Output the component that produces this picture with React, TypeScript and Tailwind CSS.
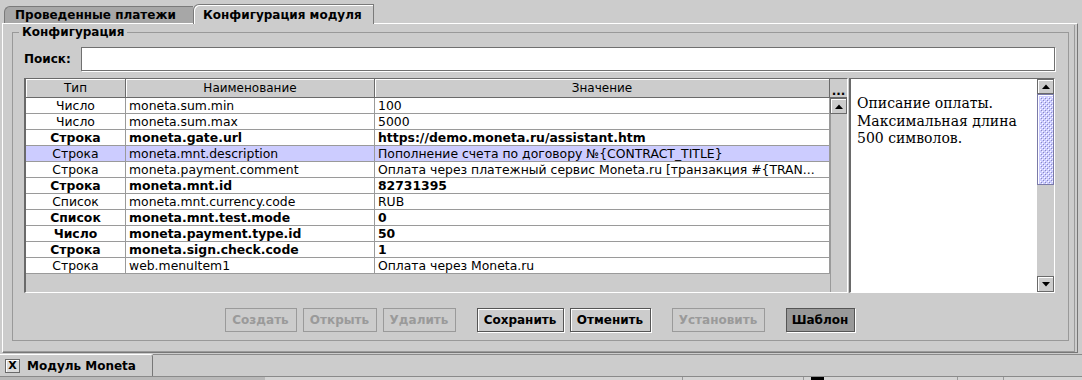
import React from 'react';

type Row = { type: string; name: string; value: string; bold?: boolean; selected?: boolean };

const rows: Row[] = [
  { type: 'Число', name: 'moneta.sum.min', value: '100' },
  { type: 'Число', name: 'moneta.sum.max', value: '5000' },
  { type: 'Строка', name: 'moneta.gate.url', value: 'https://demo.moneta.ru/assistant.htm', bold: true },
  { type: 'Строка', name: 'moneta.mnt.description', value: 'Пополнение счета по договору №{CONTRACT_TITLE}', selected: true },
  { type: 'Строка', name: 'moneta.payment.comment', value: 'Оплата через платежный сервис Moneta.ru [транзакция #{TRAN...' },
  { type: 'Строка', name: 'moneta.mnt.id', value: '82731395', bold: true },
  { type: 'Список', name: 'moneta.mnt.currency.code', value: 'RUB' },
  { type: 'Список', name: 'moneta.mnt.test.mode', value: '0', bold: true },
  { type: 'Число', name: 'moneta.payment.type.id', value: '50', bold: true },
  { type: 'Строка', name: 'moneta.sign.check.code', value: '1', bold: true },
  { type: 'Строка', name: 'web.menuItem1', value: 'Оплата через Moneta.ru' },
];

const buttons = [
  { label: 'Создать', w: 'w-[72px]', state: 'off', gap: '' },
  { label: 'Открыть', w: 'w-[74px]', state: 'off', gap: 'ml-[6px]' },
  { label: 'Удалить', w: 'w-[73px]', state: 'off', gap: 'ml-[6px]' },
  { label: 'Сохранить', w: 'w-[87px]', state: 'on', gap: 'ml-[21px]' },
  { label: 'Отменить', w: 'w-[81px]', state: 'on', gap: 'ml-[6px]' },
  { label: 'Установить', w: 'w-[93px]', state: 'off', gap: 'ml-[21px]' },
  { label: 'Шаблон', w: 'w-[69px]', state: 'pressed', gap: 'ml-[21px]' },
];

const Arrow = ({ down }: { down?: boolean }) => (
  <svg width="8" height="5" viewBox="0 0 8 5">
    <path d={down ? 'M0 0 L8 0 L4 4.5 Z' : 'M0 5 L4 0.5 L8 5 Z'} fill="#000" />
  </svg>
);

const ArrowButton = ({ down, h }: { down?: boolean; h: string }) => (
  <div className={`${h} flex items-center justify-center bg-[#cccccc] border border-[#6a6a6a] shadow-[inset_1px_1px_0_#ffffff]`}>
    <Arrow down={down} />
  </div>
);

const Bumps = () => (
  <svg width="100%" height="100%">
    <defs>
      <pattern id="bumps" width="4" height="4" patternUnits="userSpaceOnUse">
        <rect x="0" y="0" width="1" height="1" fill="#ffffff" />
        <rect x="1" y="1" width="1" height="1" fill="#8a8ac0" />
        <rect x="2" y="2" width="1" height="1" fill="#ffffff" />
        <rect x="3" y="3" width="1" height="1" fill="#8a8ac0" />
      </pattern>
    </defs>
    <rect x="2" y="2" width="100%" height="100%" fill="url(#bumps)" />
  </svg>
);

export default function App() {
  return (
    <div className="w-[1082px] h-[380px] bg-[#cccccc] overflow-hidden flex flex-col text-black font-['DejaVu_Sans',sans-serif]">
      {/* Tabs */}
      <div className="h-[23px] flex items-end pl-[4px]">
        <div className="h-[17px] w-[189px] bg-[#a7a7a7] border-t border-l border-[#7a7a7a] rounded-tl-[6px] flex items-center pl-[10px] text-[12px] font-bold leading-none">
          Проведенные платежи
        </div>
        <div className="relative z-10 -mb-[1px] h-[20px] w-[181px] bg-[#cccccc] border-t border-l border-r border-[#7a7a7a] rounded-tl-[6px] shadow-[inset_1px_1px_0_#ffffff] flex items-center pl-[9px] text-[12px] font-bold leading-none">
          Конфигурация модуля
        </div>
      </div>

      <div className="flex">
        {/* Main panel */}
        <div className="ml-[2px] w-[1076px] h-[330px] border-t border-l border-t-white border-l-white border-r border-b border-r-[#777777] border-b-[#777777]">
          <div className="w-[1072px] h-[327px] border-r border-b border-r-[#9a9a9a] border-b-[#9a9a9a]">
            <fieldset className="ml-[9px] mt-[1px] w-[1057px] border border-[#999999] p-0">
              <legend className="ml-[6px] px-[3px] text-[12px] font-bold leading-[14px]">Конфигурация</legend>
              <div className="pl-[11px] pr-[13px] pt-[8px] pb-[8px]">
                {/* Search */}
                <div className="flex items-center h-[24px]">
                  <span className="w-[57px] text-[12px] font-bold">Поиск:</span>
                  <div className="w-[974px] h-[24px] bg-white border border-[#707070] shadow-[1px_1px_0_#ffffff]" />
                </div>

                {/* Table + description */}
                <div className="mt-[7px] flex">
                  <div className="w-[824px] h-[215px] border-t border-l-2 border-t-[#6a6a6a] border-l-[#6a6a6a] border-r border-b border-r-white border-b-white flex">
                    <div className="w-[804px] flex flex-col">
                      <div className="h-[19px] flex border-b border-[#6a6a6a] text-[12px]">
                        <div className="w-[100px] border-r border-[#6a6a6a] shadow-[inset_1px_1px_0_#ffffff] flex items-center justify-center">Тип</div>
                        <div className="w-[249px] border-r border-[#6a6a6a] shadow-[inset_1px_1px_0_#ffffff] flex items-center justify-center">Наименование</div>
                        <div className="w-[455px] border-r border-[#6a6a6a] shadow-[inset_1px_1px_0_#ffffff] flex items-center justify-center">Значение</div>
                      </div>
                      {rows.map((r) => (
                        <div
                          key={r.name}
                          className={`h-[16px] flex border-b border-[#9a9a9a] text-[12.4px] leading-[15px] whitespace-nowrap ${
                            r.selected ? 'bg-[#ccccff]' : 'bg-white'
                          } ${r.bold ? 'font-bold' : ''}`}
                        >
                          <div className="w-[100px] border-r border-[#9a9a9a] text-center">{r.type}</div>
                          <div className="w-[249px] border-r border-[#9a9a9a] pl-[3px] overflow-hidden">{r.name}</div>
                          <div className="w-[455px] border-r border-[#9a9a9a] pl-[3px] overflow-hidden">{r.value}</div>
                        </div>
                      ))}
                    </div>
                    <div className="w-[17px] flex flex-col">
                      <div className="h-[19px] border-b border-[#6a6a6a] flex items-end justify-center text-[12px] font-bold leading-[12px]">...</div>
                      <ArrowButton h="h-[16px]" />
                      <div className="flex-1 border-l border-[#9a9a9a]" />
                    </div>
                  </div>

                  <div className="ml-[1px] w-[206px] h-[215px] border-t border-l-2 border-t-[#6a6a6a] border-l-[#6a6a6a] border-r border-b border-r-white border-b-white flex">
                    <div className="w-[186px] bg-white pl-[6px] pt-[16px] text-[14px] leading-[17.5px] font-['DejaVu_Serif',serif]">
                      <div>Описание оплаты.</div>
                      <div>Максимальная длина</div>
                      <div>500 символов.</div>
                    </div>
                    <div className="w-[17px] flex flex-col">
                      <ArrowButton h="h-[15px]" />
                      <div className="h-[91px] bg-[#ccccff] border border-[#7a7aa8] shadow-[inset_1px_1px_0_#ffffff]">
                        <Bumps />
                      </div>
                      <div className="flex-1" />
                      <ArrowButton down h="h-[16px]" />
                    </div>
                  </div>
                </div>

                {/* Buttons */}
                <div className="mt-[15px] flex justify-center">
                  {buttons.map((b) => (
                    <div
                      key={b.label}
                      className={`${b.w} ${b.gap} h-[24px] flex items-center justify-center text-[12px] font-bold border ${
                        b.state === 'off'
                          ? 'border-[#9a9a9a] text-[#9a9a9a]'
                          : b.state === 'pressed'
                          ? 'border-[#555555] bg-[#999999] shadow-[1px_1px_0_#ffffff]'
                          : 'border-[#555555] shadow-[1px_1px_0_#ffffff,inset_1px_1px_0_#ffffff]'
                      }`}
                    >
                      {b.label}
                    </div>
                  ))}
                </div>
              </div>
            </fieldset>
          </div>
        </div>
        <div className="w-[4px] h-[330px] bg-[#cccccc]" />
      </div>

      {/* Bottom module tab */}
      <div className="h-[24px] flex border-b border-[#8a8a8a]">
        <div className="w-[153px] mt-[1px] border-t border-t-white border-r border-r-[#777777] rounded-tr-[3px] flex items-center">
          <div className="ml-[5px] w-[15px] h-[14px] border border-[#6a6a6a] bg-[#dcdcdc] shadow-[inset_1px_1px_0_#ffffff] flex items-center justify-center text-[11px] font-bold leading-none">
            X
          </div>
          <span className="ml-[7px] text-[12px] font-bold">Модуль Moneta</span>
        </div>
        <div className="flex-1 mt-[1px] border-t border-[#8a8a8a]" />
      </div>

      {/* Strip of window below */}
      <div className="flex-1 flex bg-[#d4d4d4]">
        <div className="w-[265px] bg-[#b8b8b8]" />
        <div className="w-[418px] border-r border-[#999999]" />
        <div className="w-[121px] border-r border-[#999999]" />
        <div className="w-[7px]" />
        <div className="w-[13px] bg-black" />
        <div className="w-[134px] border-r border-[#999999]" />
        <div className="w-[46px] border-r border-[#999999]" />
        <div className="flex-1" />
      </div>
    </div>
  );
}
